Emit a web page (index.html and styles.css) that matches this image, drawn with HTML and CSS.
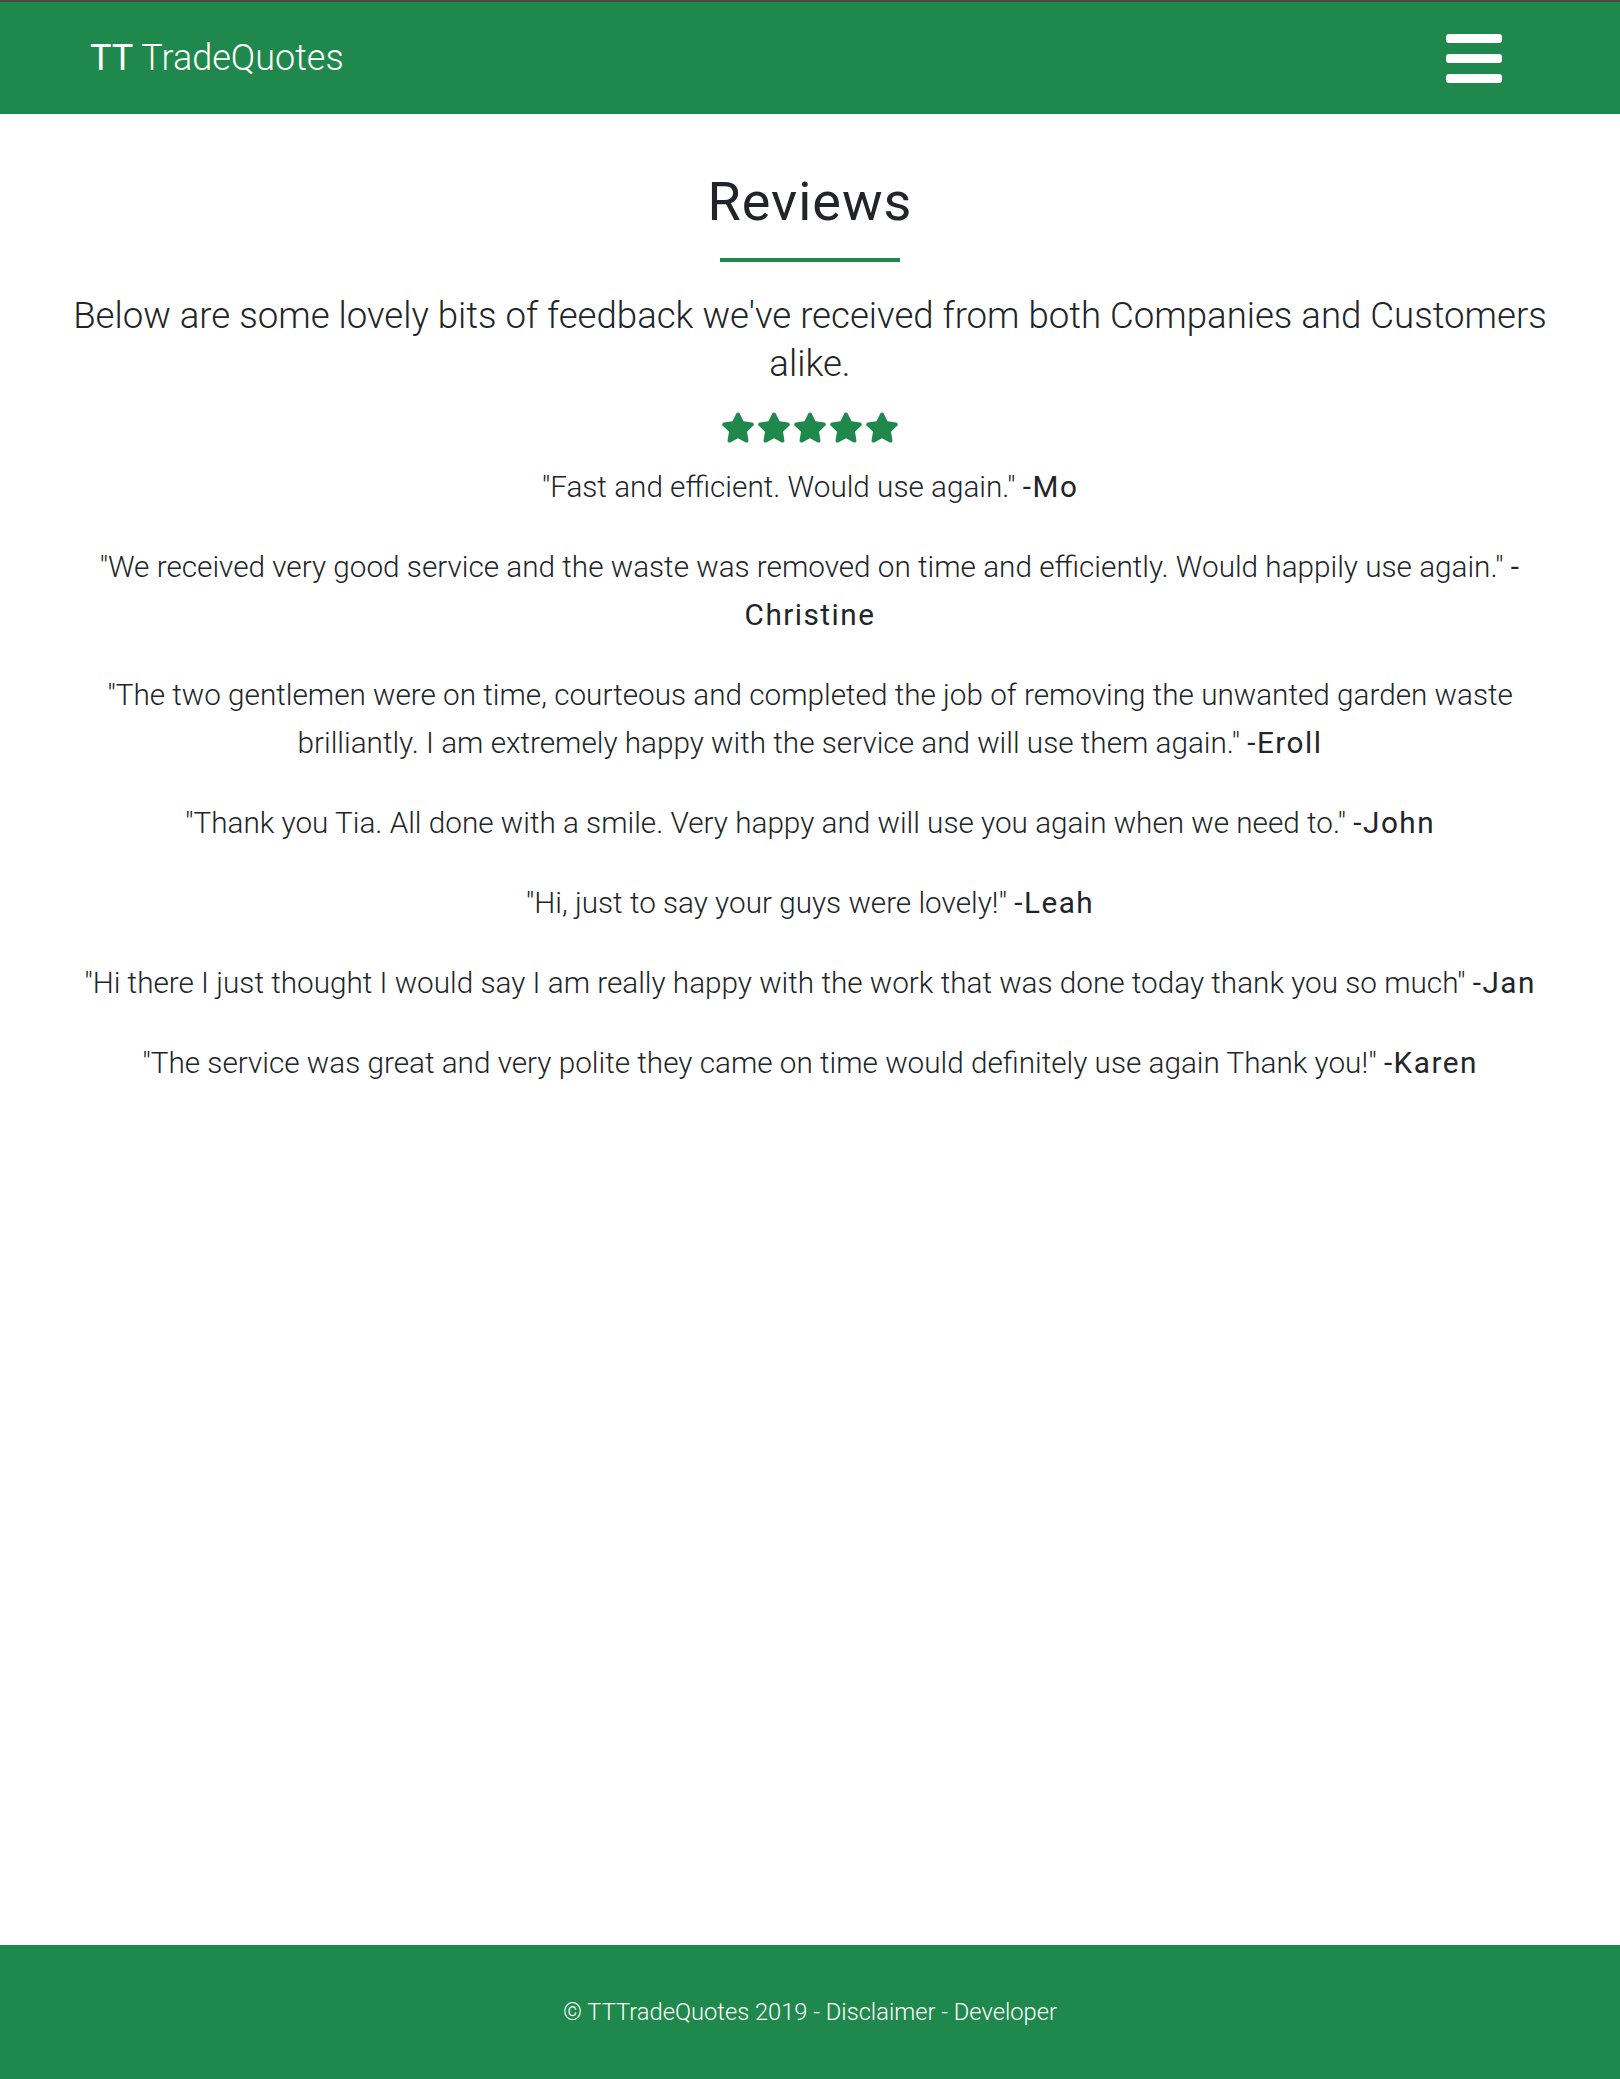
FILE: index.html
```html
<!DOCTYPE html>
<html lang="en">
<head>
<meta charset="utf-8">
<title>Reviews - TT TradeQuotes</title>
<link rel="stylesheet" href="styles.css">
</head>
<body>
<div class="page">
  <header class="topbar">
    <a class="brand" href="#"><span class="brand-tt">TT</span> TradeQuotes</a>
    <button class="menu-btn" aria-label="Menu">
      <span class="bar"></span><span class="bar"></span><span class="bar"></span>
    </button>
  </header>
  <main class="content">
    <h1 class="title">Reviews</h1>
    <div class="title-rule"></div>
    <p class="lead">Below are some lovely bits of feedback we've received from both Companies and Customers alike.</p>
    <div class="stars">
      <svg class="star" viewBox="0 0 576 512"><path d="M259.3 17.8L194 150.2 47.9 171.5c-26.2 3.8-36.7 36.1-17.7 54.6l105.7 103-25 145.5c-4.5 26.3 23.2 46 46.4 33.7L288 439.6l130.7 68.7c23.2 12.2 50.9-7.4 46.4-33.7l-25-145.5 105.7-103c19-18.5 8.5-50.8-17.7-54.6L382 150.2 316.7 17.8c-11.7-23.6-45.6-23.9-57.4 0z"/></svg>
      <svg class="star" viewBox="0 0 576 512"><path d="M259.3 17.8L194 150.2 47.9 171.5c-26.2 3.8-36.7 36.1-17.7 54.6l105.7 103-25 145.5c-4.5 26.3 23.2 46 46.4 33.7L288 439.6l130.7 68.7c23.2 12.2 50.9-7.4 46.4-33.7l-25-145.5 105.7-103c19-18.5 8.5-50.8-17.7-54.6L382 150.2 316.7 17.8c-11.7-23.6-45.6-23.9-57.4 0z"/></svg>
      <svg class="star" viewBox="0 0 576 512"><path d="M259.3 17.8L194 150.2 47.9 171.5c-26.2 3.8-36.7 36.1-17.7 54.6l105.7 103-25 145.5c-4.5 26.3 23.2 46 46.4 33.7L288 439.6l130.7 68.7c23.2 12.2 50.9-7.4 46.4-33.7l-25-145.5 105.7-103c19-18.5 8.5-50.8-17.7-54.6L382 150.2 316.7 17.8c-11.7-23.6-45.6-23.9-57.4 0z"/></svg>
      <svg class="star" viewBox="0 0 576 512"><path d="M259.3 17.8L194 150.2 47.9 171.5c-26.2 3.8-36.7 36.1-17.7 54.6l105.7 103-25 145.5c-4.5 26.3 23.2 46 46.4 33.7L288 439.6l130.7 68.7c23.2 12.2 50.9-7.4 46.4-33.7l-25-145.5 105.7-103c19-18.5 8.5-50.8-17.7-54.6L382 150.2 316.7 17.8c-11.7-23.6-45.6-23.9-57.4 0z"/></svg>
      <svg class="star" viewBox="0 0 576 512"><path d="M259.3 17.8L194 150.2 47.9 171.5c-26.2 3.8-36.7 36.1-17.7 54.6l105.7 103-25 145.5c-4.5 26.3 23.2 46 46.4 33.7L288 439.6l130.7 68.7c23.2 12.2 50.9-7.4 46.4-33.7l-25-145.5 105.7-103c19-18.5 8.5-50.8-17.7-54.6L382 150.2 316.7 17.8c-11.7-23.6-45.6-23.9-57.4 0z"/></svg>
    </div>
    <div class="reviews">
      <p class="review">"Fast and efficient. Would use again." <span class="author">-Mo</span></p>
      <p class="review">"We received very good service and the waste was removed on time and efficiently. Would happily use again." <span class="author">-Christine</span></p>
      <p class="review">"The two gentlemen were on time, courteous and completed the job of removing the unwanted garden waste brilliantly. I am extremely happy with the service and will use them again." <span class="author">-Eroll</span></p>
      <p class="review">"Thank you Tia. All done with a smile. Very happy and will use you again when we need to." <span class="author">-John</span></p>
      <p class="review">"Hi, just to say your guys were lovely!" <span class="author">-Leah</span></p>
      <p class="review">"Hi there I just thought I would say I am really happy with the work that was done today thank you so much" <span class="author">-Jan</span></p>
      <p class="review">"The service was great and very polite they came on time would definitely use again Thank you!" <span class="author">-Karen</span></p>
    </div>
  </main>
  <footer class="footer">
    <p class="footer-text">© TTTradeQuotes 2019 - <a href="#">Disclaimer</a> - <a href="#">Developer</a></p>
  </footer>
</div>
</body>
</html>
```
FILE: styles.css
```css
* { box-sizing: border-box; }
html, body { margin: 0; padding: 0; }
body {
  font-family: Roboto, "Open Sans", Arial, sans-serif;
  font-weight: 300;
  color: #212529;
  background: #fff;
}
.page {
  min-height: 2079px;
  display: flex;
  flex-direction: column;
}
.topbar {
  height: 114px;
  border-top: 2px solid #4a4a4a;
  background: #1f884c;
  display: flex;
  align-items: center;
  justify-content: space-between;
  padding: 0 118px 0 90px;
}
.brand {
  color: #fff;
  text-decoration: none;
  font-size: 36px;
  font-weight: 300;
}
.brand-tt { font-weight: 400; }
.menu-btn {
  background: none;
  border: 0;
  padding: 0;
  width: 56px;
  display: flex;
  flex-direction: column;
  gap: 11px;
  cursor: pointer;
}
.bar {
  display: block;
  height: 9px;
  width: 56px;
  background: #fff;
  border-radius: 3px;
}
.content {
  flex: 1;
  padding: 55px 55px 40px;
  text-align: center;
}
.title {
  margin: 0;
  font-size: 54px;
  line-height: 66px;
  font-weight: 400;
  letter-spacing: 1px;
}
.title-rule {
  width: 180px;
  height: 4px;
  background: #1f884c;
  margin: 23px auto 0;
}
.lead {
  margin: 30px 0 0;
  font-size: 36.6px;
  line-height: 48px;
  font-weight: 300;
}
.stars {
  display: flex;
  justify-content: center;
  gap: 2px;
  margin-top: 24px;
  height: 31px;
}
.star {
  width: 34px;
  height: 31px;
  fill: #1f884c;
}
.reviews { margin-top: 20px; }
.review {
  margin: 0 0 32px;
  font-size: 29.7px;
  line-height: 48px;
  font-weight: 300;
}
.author {
  font-weight: 400;
  letter-spacing: 1.5px;
}
.footer {
  height: 134px;
  background: #1f884c;
  display: flex;
  align-items: center;
  justify-content: center;
}
.footer-text {
  margin: 0;
  color: #fff;
  font-size: 23.7px;
  font-weight: 300;
}
.footer-text a { color: #fff; text-decoration: none; }
```
